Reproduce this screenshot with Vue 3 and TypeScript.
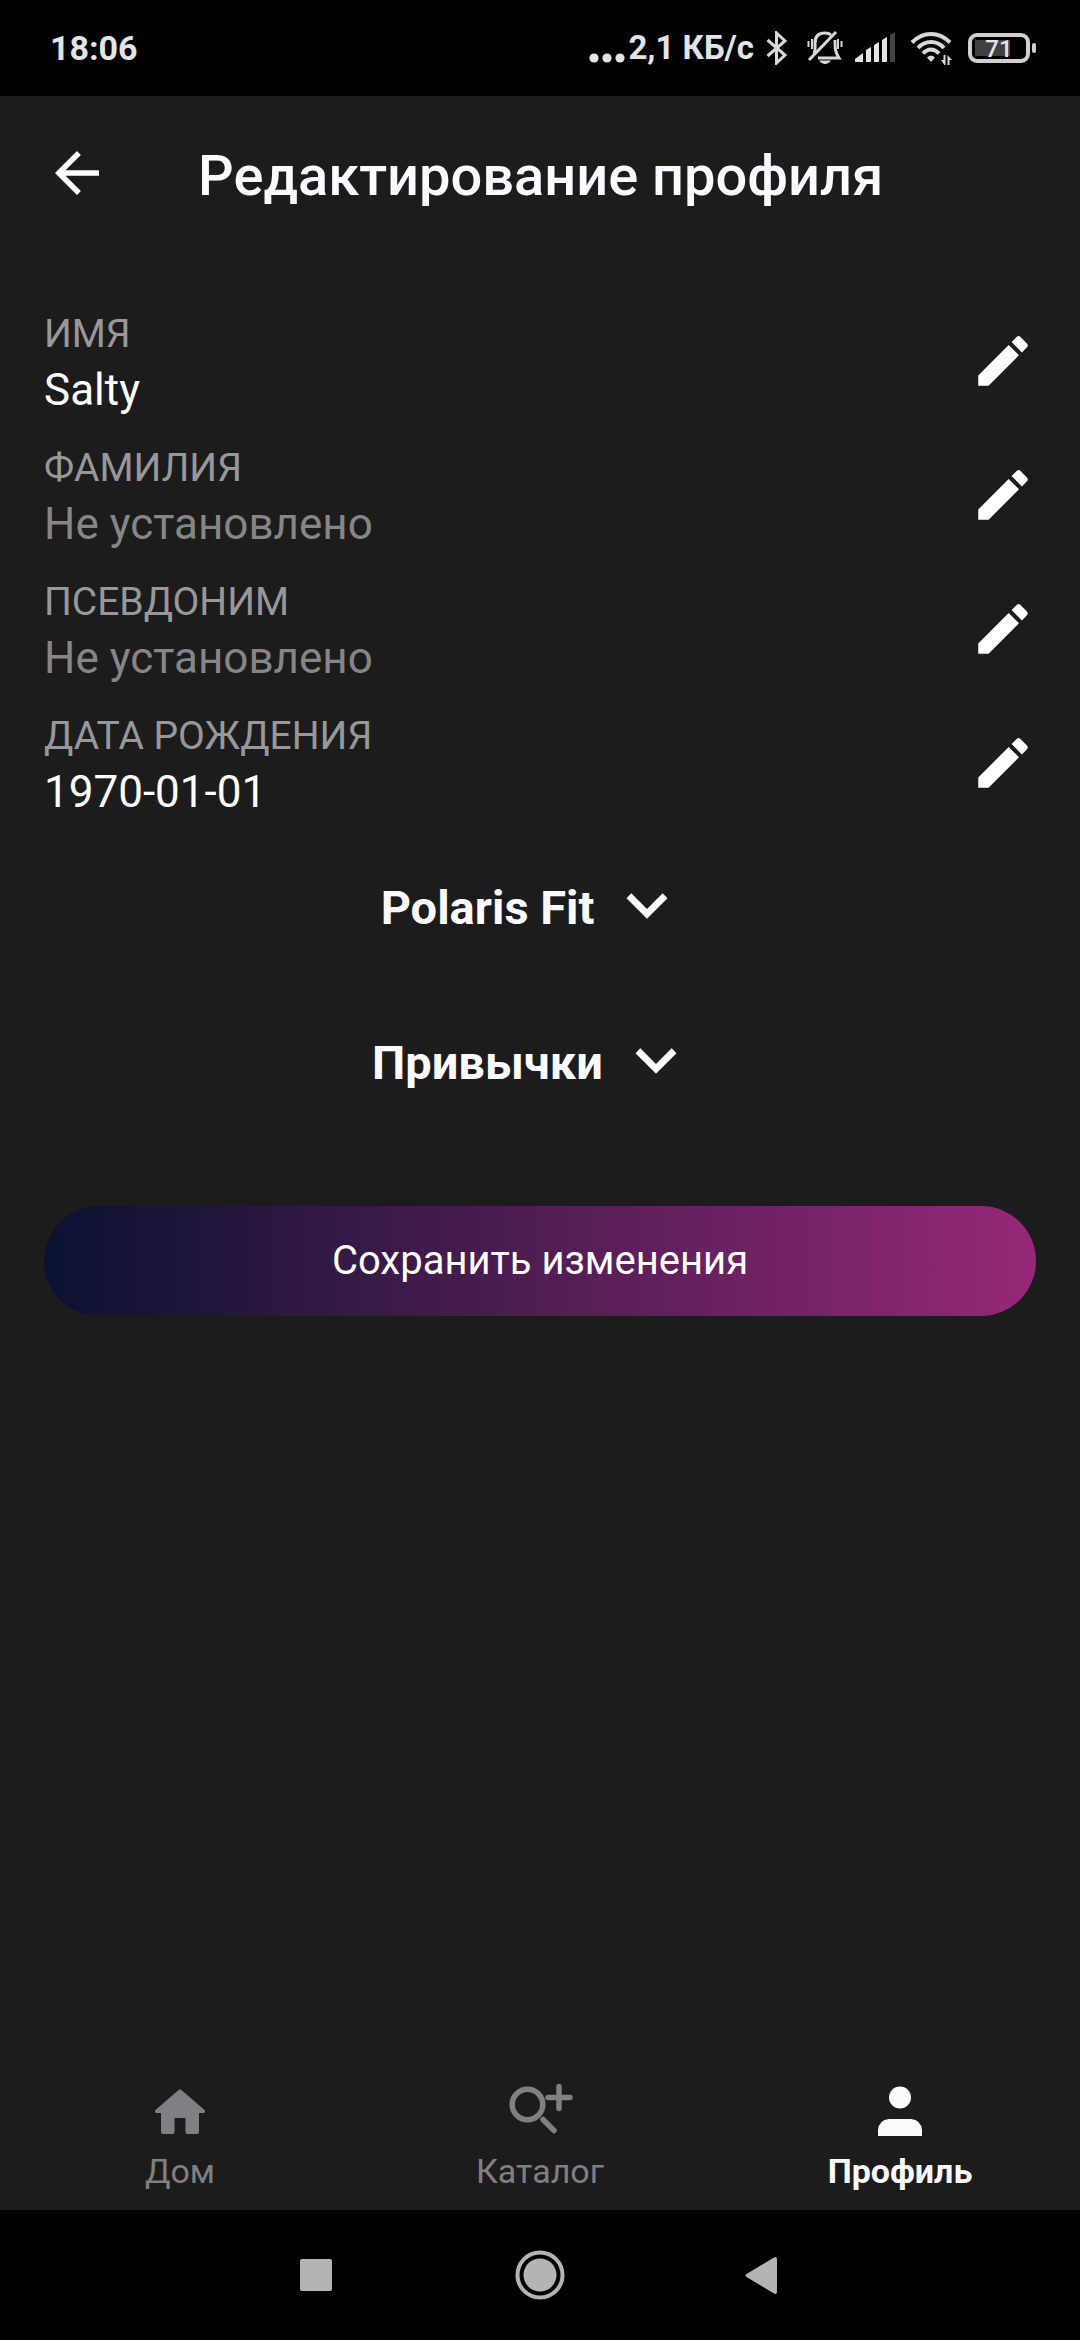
<script setup lang="ts">
interface Field {
  label: string
  value: string | null
}

interface Signal {
  x: number
  top: number
}

const fields: Field[] = [
  { label: 'ИМЯ', value: 'Salty' },
  { label: 'ФАМИЛИЯ', value: null },
  { label: 'ПСЕВДОНИМ', value: null },
  { label: 'ДАТА РОЖДЕНИЯ', value: '1970-01-01' },
]

const sections: string[] = ['Polaris Fit', 'Привычки']

const bars: Signal[] = [
  { x: 11, top: 16 },
  { x: 19, top: 11 },
  { x: 27, top: 6 },
]
</script>

<template>
  <div class="screen">
    <header class="status">
      <time class="clock">18:06</time>
      <div class="indicators">
        <svg class="dots" width="36" height="34" viewBox="0 0 36 34" aria-hidden="true">
          <circle cx="5" cy="27" r="4.6" /><circle cx="18" cy="27" r="4.6" /><circle cx="31" cy="27" r="4.6" />
        </svg>
        <span class="speed">2,1 КБ/с</span>
        <svg class="bluetooth" width="22" height="34" viewBox="0 0 22 34" aria-hidden="true">
          <path d="M1.5 9 L19 24 L10.5 32 V2 L19 10 L1.5 25" />
        </svg>
        <svg class="bell" width="36" height="34" viewBox="0 0 36 34" aria-hidden="true">
          <path d="M7 23 C9 19 8 16 8 12 C8 5 12 2 18 2 C21 2 23 3 24 4" />
          <path d="M28 9 C28 17 28 21 32 27 H11" />
          <path d="M2 29 L29 1" />
          <path class="wave" d="M1.5 10 V16 M5 8 V18 M31 8 V18 M34.5 10 V16" />
          <path class="clapper" d="M12 29.500 H24 C21 34 15 34 12 29.500 Z" />
        </svg>
        <svg class="signal" width="42" height="34" viewBox="0 0 42 34" aria-hidden="true">
          <path d="M0 31 V28 L8 22 V31 Z" />
          <path v-for="b in bars" :key="b.x" :d="`M${b.x} 31 V${b.top + 3} L${b.x + 5} ${b.top} V31 Z`" />
          <path class="weak" d="M35 31 V4 L40 1 V31 Z" />
        </svg>
        <svg class="wifi" width="44" height="36" viewBox="0 0 44 36" aria-hidden="true">
          <path d="M2 12.500 C13 1 29 1 40 12.500" />
          <path d="M8 18 C15 10 27 10 34 18" />
          <path d="M13 23.500 C18 18 24 18 29 23.500" />
          <path class="solid" d="M17 27.500 C19 25 23 25 25 27.500 L21 32 Z" />
          <path class="solid" d="M34.500 35 L31 30 H33.500 V25 H35.500 V35 Z M37.500 25 L42 30 H39.500 V35 H37.500 Z" />
        </svg>
        <span class="battery"><span class="cell">71</span><i class="cap"></i></span>
      </div>
    </header>

    <div class="app">
      <div class="bar">
        <button class="icon-button" type="button" aria-label="Назад">
          <svg width="66" height="66" viewBox="0 0 24 24" aria-hidden="true">
            <path d="M20 11H7.830l5.590-5.590L12 4l-8 8 8 8 1.410-1.410L7.830 13H20v-2z" />
          </svg>
        </button>
        <h1 class="title">Редактирование профиля</h1>
      </div>

      <main class="content">
        <div v-for="field in fields" :key="field.label" class="field">
          <div class="text">
            <span class="label">{{ field.label }}</span>
            <span class="value" :class="{ empty: !field.value }">{{ field.value ?? 'Не установлено' }}</span>
          </div>
          <button class="icon-button" type="button" :aria-label="`Изменить: ${field.label}`">
            <svg width="66" height="66" viewBox="0 0 24 24" aria-hidden="true">
              <path d="M3 17.250V21h3.750L17.810 9.940l-3.750-3.750L3 17.250zM20.710 7.040c.390-.390.390-1.020 0-1.410l-2.340-2.340a.996.996 0 0 0-1.410 0l-1.830 1.830 3.750 3.750 1.830-1.830z" />
            </svg>
          </button>
        </div>

        <div class="sections">
          <button v-for="name in sections" :key="name" class="section" type="button" aria-expanded="false">
            <span class="section-name">{{ name }}</span>
            <svg width="82" height="82" viewBox="0 0 24 24" aria-hidden="true">
              <path d="M16.590 8.590L12 13.170 7.410 8.590 6 10l6 6 6-6z" />
            </svg>
          </button>
        </div>

        <button class="save" type="button">Сохранить изменения</button>
      </main>

      <nav class="tabs">
        <a class="tab" href="#home">
          <svg width="66" height="66" viewBox="0 0 66 66" aria-hidden="true">
            <path d="M31 11.500 Q33 9.500 35 11.500 L57.500 31 Q59 33.500 56.500 34 H52 V53 Q52 55 50 55 H40.500 Q38.500 55 38.500 53 V39 H27.500 V53 Q27.500 55 25.500 55 H16 Q14 55 14 53 V34 H9.500 Q7 33.500 8.500 31 Z" />
          </svg>
          <span>Дом</span>
        </a>
        <a class="tab" href="#catalog">
          <svg width="66" height="66" viewBox="0 0 66 66" aria-hidden="true">
            <g class="stroke">
              <circle cx="20.500" cy="25.500" r="15.300" />
              <path d="M36 40.500 L47 51.500 M41 18.500 H63 M52 7.500 V29.500" />
            </g>
          </svg>
          <span>Каталог</span>
        </a>
        <a class="tab active" href="#profile" aria-current="page">
          <svg width="66" height="66" viewBox="0 0 66 66" aria-hidden="true">
            <circle cx="33" cy="18.500" r="11" />
            <path d="M11 57 V51 Q12 41 22 40 H44 Q54 41 55 51 V57 Z" />
          </svg>
          <span>Профиль</span>
        </a>
      </nav>
    </div>

    <footer class="system">
      <button class="system-button" type="button" aria-label="Недавние">
        <svg width="50" height="50" viewBox="0 0 50 50" aria-hidden="true">
          <rect x="8" y="9" width="32" height="32" rx="2" />
        </svg>
      </button>
      <button class="system-button" type="button" aria-label="Главный экран">
        <svg width="50" height="50" viewBox="0 0 50 50" aria-hidden="true">
          <circle cx="25" cy="25" r="16.500" />
          <circle class="ring" cx="25" cy="25" r="22.500" />
        </svg>
      </button>
      <button class="system-button" type="button" aria-label="Назад">
        <svg width="50" height="50" viewBox="0 0 50 50" aria-hidden="true">
          <path d="M8.500 27 Q6.500 25.500 8.500 24 L36 7.500 Q39 6 39 9 V42 Q39 45 36 43.500 Z" />
        </svg>
      </button>
    </footer>
  </div>
</template>

<style>
body {
  margin: 0;
  background: #000;
}
</style>

<style scoped>
.screen {
  display: flex;
  flex-direction: column;
  min-height: 100vh;
  background: #000;
  color: #fff;
  font-family: Roboto, "Noto Sans", sans-serif;
}

button {
  margin: 0;
  padding: 0;
  border: 0;
  background: none;
  color: inherit;
  font: inherit;
  cursor: pointer;
}

svg {
  display: block;
  flex: none;
  fill: currentColor;
}

.status {
  display: flex;
  align-items: center;
  justify-content: space-between;
  height: 96px;
  padding: 0 44px 0 50px;
  color: #e4e4e4;
  font-size: 34px;
  font-weight: 700;
  line-height: 40px;
}

.indicators {
  display: flex;
  align-items: center;
}

.dots {
  margin-right: 3px;
}

.speed {
  font-size: 33px;
}

.bluetooth,
.bell,
.wifi {
  fill: none;
  stroke: #d8d8d8;
  stroke-width: 3;
}

.bluetooth {
  margin-left: 12px;
}

.bell {
  margin-left: 19px;
}

.wave {
  stroke-width: 2;
}

.clapper {
  fill: #d8d8d8;
  stroke: none;
}

.signal {
  margin-left: 12px;
}

.weak {
  fill: #444;
}

.wifi {
  margin-left: 13px;
  stroke-width: 4;
}

.solid {
  fill: #d8d8d8;
  stroke: none;
}

.battery {
  display: flex;
  align-items: center;
  gap: 2px;
  margin-left: 14px;
}

.cell {
  box-sizing: border-box;
  width: 62px;
  height: 30px;
  border: 4px solid #d0d0d0;
  border-radius: 9px;
  background: linear-gradient(90deg, #404040 35px, #000 35px) 3px 3px / 48px 16px no-repeat;
  font-size: 24px;
  font-weight: 500;
  line-height: 24px;
  text-align: center;
}

.cap {
  width: 4px;
  height: 10px;
  border-radius: 2px;
  background: #d0d0d0;
}

.app {
  display: flex;
  flex: 1;
  flex-direction: column;
  background: #1c1c1c;
}

.bar {
  display: flex;
  align-items: center;
  gap: 88px;
  height: 154px;
  padding: 0 44px;
}

.icon-button {
  flex: none;
}

.title {
  margin: 6px 0 0;
  color: #fafaff;
  font-size: 56px;
  font-weight: 500;
  line-height: 64px;
}

.content {
  flex: 1;
  padding: 44px 44px 0;
}

.field {
  display: flex;
  align-items: center;
  justify-content: space-between;
  height: 134px;
}

.text {
  display: flex;
  flex-direction: column;
  gap: 7px;
  padding-top: 5px;
}

.label {
  color: #98989a;
  font-size: 39px;
  line-height: 46px;
}

.value {
  font-size: 44px;
  line-height: 52px;
}

.empty {
  color: #868686;
}

.sections {
  display: flex;
  flex-direction: column;
  align-items: center;
  gap: 5px;
  padding: 0 11px 71px 0;
}

.section {
  display: flex;
  align-items: center;
  gap: 12px;
  height: 150px;
  color: #fafaff;
}

.section-name {
  padding-top: 6px;
  font-size: 47px;
  font-weight: 700;
  line-height: 56px;
}

.save {
  display: block;
  width: 100%;
  height: 110px;
  border-radius: 55px;
  background: linear-gradient(90deg, #0a1230, #962878);
  font-size: 40px;
  line-height: 46px;
}

.tabs {
  display: flex;
  height: 134px;
}

.tab {
  display: flex;
  flex: 1;
  flex-direction: column;
  align-items: center;
  gap: 6px;
  padding-top: 3px;
  color: #808084;
  font-size: 34px;
  line-height: 40px;
  text-decoration: none;
}

.active {
  color: #fafaff;
  font-weight: 700;
}

.stroke {
  fill: none;
  stroke: currentColor;
  stroke-width: 5.500;
  stroke-linecap: round;
}

.system {
  display: flex;
  align-items: center;
  justify-content: center;
  gap: 173px;
  height: 130px;
  color: #b4b4b4;
}

.ring {
  fill: none;
  stroke: currentColor;
  stroke-width: 4;
}
</style>
